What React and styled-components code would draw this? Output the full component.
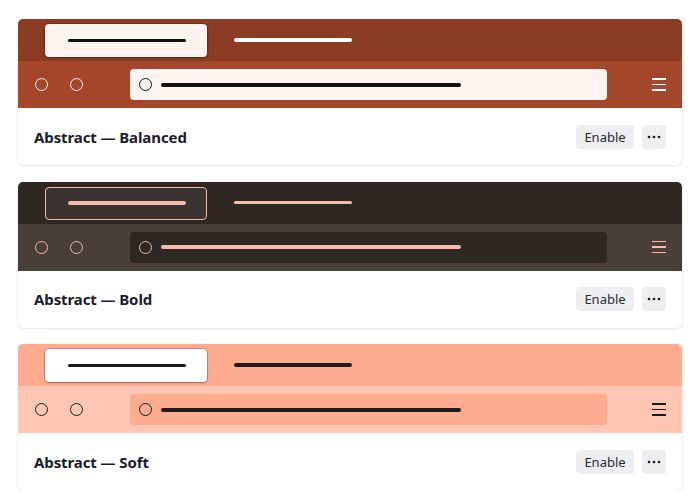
import styled, { createGlobalStyle } from "styled-components";

const GlobalStyle = createGlobalStyle`
  body {
    margin: 0;
    background: #ffffff;
    font-family: "Noto Sans", "Open Sans", sans-serif;
  }
`;

const themes = [
  {
    name: "Abstract — Balanced",
    strip: "#8b3c23",
    toolbar: "#a4462a",
    tabBg: "#fdf3f0",
    tabEdge: "none",
    tabShadow: "0 0 0 1px rgba(0,0,0,0.18), 0 1px 3px rgba(0,0,0,0.25)",
    tabLine: "#111111",
    inactiveLine: "#ffffff",
    toolIcon: "#ffffff",
    field: "#fdf3f0",
    fieldIcon: "#111111",
  },
  {
    name: "Abstract — Bold",
    strip: "#2e2724",
    toolbar: "#4a3e39",
    tabBg: "#3a3331",
    tabEdge: "1px solid #f4bba8",
    tabShadow: "none",
    tabLine: "#f4bba8",
    inactiveLine: "#f4bba8",
    toolIcon: "#f4bba8",
    field: "#2e2724",
    fieldIcon: "#f4bba8",
  },
  {
    name: "Abstract — Soft",
    strip: "#ffab8f",
    toolbar: "#ffc6b3",
    tabBg: "#ffffff",
    tabEdge: "none",
    tabShadow: "0 0 0 1px rgba(0,0,0,0.22), 0 1px 2px rgba(0,0,0,0.2)",
    tabLine: "#1c1a1a",
    inactiveLine: "#1c1a1a",
    toolIcon: "#1c1a1a",
    field: "#ffab8f",
    fieldIcon: "#1c1a1a",
  },
];

const Page = styled.div`
  display: flex;
  flex-direction: column;
  gap: 16.5px;
  padding: 19px 17px 0 18px;
`;

const Card = styled.div`
  width: 664px;
  background: #ffffff;
  border-radius: 5px;
  overflow: hidden;
  box-shadow: 0 1px 3px rgba(0, 0, 0, 0.1), 0 0 1px rgba(0, 0, 0, 0.08);
`;

const TabStrip = styled.div`
  height: 42px;
  background: ${(p) => p.$bg};
  display: flex;
  align-items: center;
  padding-left: 27px;
  gap: 27px;
`;

const Tab = styled.div`
  box-sizing: border-box;
  width: 162px;
  height: 33px;
  margin-top: 1px;
  padding-left: 2px;
  border-radius: 4px;
  background: ${(p) => p.$bg};
  border: ${(p) => p.$edge};
  box-shadow: ${(p) => p.$shadow};
  display: flex;
  align-items: center;
  justify-content: center;
`;

const Line = styled.div`
  width: ${(p) => p.$w}px;
  height: ${(p) => p.$h || 3.5}px;
  border-radius: 2px;
  background: ${(p) => p.$color};
`;

const Toolbar = styled.div`
  height: 47px;
  background: ${(p) => p.$bg};
  display: flex;
  align-items: center;
  padding: 0 16px 0 16px;
`;

const NavButtons = styled.div`
  display: flex;
  gap: 22px;
  width: 95px;
  padding-left: 1px;
`;

const Ring = styled.div`
  box-sizing: border-box;
  width: 13px;
  height: 13px;
  border-radius: 50%;
  border: 1.8px solid ${(p) => p.$color};
  flex: none;
`;

const Field = styled.div`
  width: 477px;
  height: 31px;
  border-radius: 4px;
  background: ${(p) => p.$bg};
  display: flex;
  align-items: center;
  padding-left: 9px;
  gap: 9px;
  box-sizing: border-box;
`;

const Menu = styled.div`
  margin-left: auto;
  display: flex;
  flex-direction: column;
  gap: 3.7px;
  width: 14px;
`;

const MenuBar = styled.div`
  height: 1.8px;
  background: ${(p) => p.$color};
`;

const Body = styled.div`
  height: 57px;
  display: flex;
  align-items: center;
  padding: 0 16px;
`;

const Title = styled.div`
  font-size: 15px;
  font-weight: 700;
  color: #1b1b2b;
  letter-spacing: -0.1px;
`;

const Actions = styled.div`
  margin-left: auto;
  display: flex;
  gap: 8px;
`;

const Button = styled.button`
  height: 24px;
  min-width: ${(p) => (p.$square ? "24px" : "58px")};
  padding: 0;
  border: none;
  border-radius: 4px;
  background: #eeeef0;
  color: #2a2a35;
  font-family: inherit;
  font-size: 13px;
  display: flex;
  align-items: center;
  justify-content: center;
`;

function Dots() {
  return (
    <svg width="14" height="4" viewBox="0 0 14 4">
      <circle cx="2" cy="2" r="1.3" fill="#1b1b2b" />
      <circle cx="7" cy="2" r="1.3" fill="#1b1b2b" />
      <circle cx="12" cy="2" r="1.3" fill="#1b1b2b" />
    </svg>
  );
}

function ThemeCard({ t }) {
  return (
    <Card>
      <TabStrip $bg={t.strip}>
        <Tab $bg={t.tabBg} $edge={t.tabEdge} $shadow={t.tabShadow}>
          <Line $w={118} $color={t.tabLine} />
        </Tab>
        <Line $w={118} $color={t.inactiveLine} />
      </TabStrip>
      <Toolbar $bg={t.toolbar}>
        <NavButtons>
          <Ring $color={t.toolIcon} />
          <Ring $color={t.toolIcon} />
        </NavButtons>
        <Field $bg={t.field}>
          <Ring $color={t.fieldIcon} />
          <Line $w={300} $h={4} $color={t.fieldIcon} />
        </Field>
        <Menu>
          <MenuBar $color={t.toolIcon} />
          <MenuBar $color={t.toolIcon} />
          <MenuBar $color={t.toolIcon} />
        </Menu>
      </Toolbar>
      <Body>
        <Title>{t.name}</Title>
        <Actions>
          <Button>Enable</Button>
          <Button $square>
            <Dots />
          </Button>
        </Actions>
      </Body>
    </Card>
  );
}

export default function App() {
  return (
    <>
      <GlobalStyle />
      <Page>
        {themes.map((t) => (
          <ThemeCard key={t.name} t={t} />
        ))}
      </Page>
    </>
  );
}
